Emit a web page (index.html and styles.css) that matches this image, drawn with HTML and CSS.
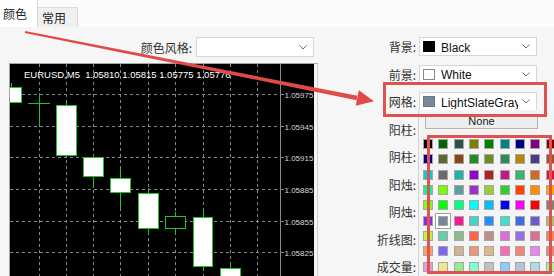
FILE: index.html
```html
<!DOCTYPE html>
<html lang="zh">
<head>
<meta charset="utf-8">
<link rel="stylesheet" href="styles.css">
</head>
<body>
<div class="tabs">
  <div class="tab active">颜色</div>
  <div class="tab">常用</div>
  <div class="tab-fill"></div>
</div>
<div class="panel">
  <div class="left">
    <div class="style-row">
      <span class="lbl">颜色风格:</span>
      <div class="combo wide"><svg class="chev" width="8" height="5" viewBox="0 0 8 5"><path d="M0.5 0.5 L4 4 L7.5 0.5" fill="none" stroke="#707070" stroke-width="1"/></svg></div>
    </div>
    <div class="chart">
      <svg class="chart-svg" width="304" height="212" viewBox="0 0 304 212">
        <g class="grid" stroke="#7d8a98" stroke-width="1" stroke-dasharray="3,3">
          <line x1="29.5" y1="0" x2="29.5" y2="212"/>
          <line x1="56.5" y1="0" x2="56.5" y2="212"/>
          <line x1="83.5" y1="0" x2="83.5" y2="212"/>
          <line x1="110.5" y1="0" x2="110.5" y2="212"/>
          <line x1="138.5" y1="0" x2="138.5" y2="212"/>
          <line x1="165.5" y1="0" x2="165.5" y2="212"/>
          <line x1="193.5" y1="0" x2="193.5" y2="212"/>
          <line x1="220.5" y1="0" x2="220.5" y2="212"/>
          <line x1="247.5" y1="0" x2="247.5" y2="212"/>
          <line x1="0" y1="30.5" x2="270" y2="30.5"/>
          <line x1="0" y1="62.5" x2="270" y2="62.5"/>
          <line x1="0" y1="93.5" x2="270" y2="93.5"/>
          <line x1="0" y1="125.5" x2="270" y2="125.5"/>
          <line x1="0" y1="157.5" x2="270" y2="157.5"/>
          <line x1="0" y1="188.5" x2="270" y2="188.5"/>
        </g>
        <line x1="270.5" y1="0" x2="270.5" y2="212" stroke="#8a8a8a"/>
        <g stroke="#8a8a8a">
          <line x1="270" y1="30.5" x2="274" y2="30.5"/>
          <line x1="270" y1="62.5" x2="274" y2="62.5"/>
          <line x1="270" y1="93.5" x2="274" y2="93.5"/>
          <line x1="270" y1="125.5" x2="274" y2="125.5"/>
          <line x1="270" y1="157.5" x2="274" y2="157.5"/>
          <line x1="270" y1="188.5" x2="274" y2="188.5"/>
        </g>
        <g class="prices" fill="#d8d8d8" font-family="Liberation Sans, Arial, sans-serif" font-size="8">
          <text x="274.5" y="33.5">1.05975</text>
          <text x="274.5" y="65.5">1.05945</text>
          <text x="274.5" y="96.5">1.05915</text>
          <text x="274.5" y="128.5">1.05885</text>
          <text x="274.5" y="160.5">1.05855</text>
          <text x="274.5" y="191.5">1.05825</text>
        </g>
        <text x="14" y="13.5" fill="#ffffff" font-family="Liberation Sans, Arial, sans-serif" font-size="9.5" xml:space="preserve">EURUSD,M5  1.05810 1.05815 1.05775 1.05776</text>
        <g stroke="#22c322" stroke-width="1" fill="none">
          <line x1="1.5" y1="19" x2="1.5" y2="23"/>
          <line x1="18" y1="39.5" x2="40" y2="39.5"/>
          <line x1="29.5" y1="29" x2="29.5" y2="61"/>
          <line x1="56.5" y1="39" x2="56.5" y2="41"/>
          <line x1="83.5" y1="113" x2="83.5" y2="124"/>
          <line x1="110.5" y1="105" x2="110.5" y2="144"/>
          <line x1="138.5" y1="124" x2="138.5" y2="171"/>
          <line x1="165.5" y1="148" x2="165.5" y2="171"/>
          <line x1="193.5" y1="145" x2="193.5" y2="206"/>
          <line x1="220.5" y1="198" x2="220.5" y2="212"/>
        </g>
        <g stroke="#22c322" stroke-width="1" fill="#ffffff">
          <rect x="-9.5" y="23.5" width="21" height="15"/>
          <rect x="46.5" y="41.5" width="20" height="50"/>
          <rect x="73.5" y="93.5" width="20" height="19"/>
          <rect x="100.5" y="114.5" width="20" height="14"/>
          <rect x="128.5" y="129.5" width="20" height="35"/>
          <rect x="155.5" y="152.5" width="20" height="12" fill="#000000"/>
          <rect x="183.5" y="153.5" width="19" height="49"/>
          <rect x="210.5" y="204.5" width="20" height="20"/>
        </g>
      </svg>
    </div>
  </div>
  <div class="right">
    <span class="lbl">背景:</span>
    <div class="combo"><span class="sw black"></span><span class="ctext">Black</span><svg class="chev" width="8" height="5" viewBox="0 0 8 5"><path d="M0.5 0.5 L4 4 L7.5 0.5" fill="none" stroke="#707070" stroke-width="1"/></svg></div>
    <span class="lbl">前景:</span>
    <div class="combo"><span class="sw white"></span><span class="ctext">White</span><svg class="chev" width="8" height="5" viewBox="0 0 8 5"><path d="M0.5 0.5 L4 4 L7.5 0.5" fill="none" stroke="#707070" stroke-width="1"/></svg></div>
    <span class="lbl">网格:</span>
    <div class="combo"><span class="sw slate"></span><span class="ctext">LightSlateGray</span><svg class="chev" width="8" height="5" viewBox="0 0 8 5"><path d="M0.5 0.5 L4 4 L7.5 0.5" fill="none" stroke="#707070" stroke-width="1"/></svg></div>
    <span class="lbl">阳柱:</span>
    <div class="combo"></div>
    <span class="lbl">阴柱:</span>
    <div class="combo"></div>
    <span class="lbl">阳烛:</span>
    <div class="combo"></div>
    <span class="lbl">阴烛:</span>
    <div class="combo"></div>
    <span class="lbl">折线图:</span>
    <div class="combo"></div>
    <span class="lbl">成交量:</span>
    <div class="combo"></div>
  </div>
</div>

<div class="popup">
  <div class="none">None</div>
  <div class="swatches">
    <span style="background:#000000"></span><span style="background:#006400"></span><span style="background:#2F4F4F"></span><span style="background:#808000"></span><span style="background:#008000"></span><span style="background:#008080"></span><span style="background:#000080"></span><span style="background:#800080"></span><span style="background:#800000"></span>
    <span style="background:#00008B"></span><span style="background:#556B2F"></span><span style="background:#8B4513"></span><span style="background:#228B22"></span><span style="background:#6B8E23"></span><span style="background:#2E8B57"></span><span style="background:#B8860B"></span><span style="background:#483D8B"></span><span style="background:#A0522D"></span>
    <span style="background:#00CED1"></span><span style="background:#696969"></span><span style="background:#20B2AA"></span><span style="background:#9400D3"></span><span style="background:#B22222"></span><span style="background:#C71585"></span><span style="background:#3CB371"></span><span style="background:#D2691E"></span><span style="background:#DC143C"></span>
    <span style="background:#00FA9A"></span><span style="background:#7CFC00"></span><span style="background:#5F9EA0"></span><span style="background:#9932CC"></span><span style="background:#9ACD32"></span><span style="background:#32CD32"></span><span style="background:#FF4500"></span><span style="background:#FF8C00"></span><span style="background:#FFA500"></span>
    <span style="background:#7FFF00"></span><span style="background:#00FF00"></span><span style="background:#00FF7F"></span><span style="background:#00FFFF"></span><span style="background:#00BFFF"></span><span style="background:#0000FF"></span><span style="background:#FF00FF"></span><span style="background:#FF0000"></span><span style="background:#808080"></span>
    <span style="background:#8A2BE2"></span><span class="sel" style="background:#778899"></span><span style="background:#FF1493"></span><span style="background:#48D1CC"></span><span style="background:#1E90FF"></span><span style="background:#40E0D0"></span><span style="background:#4169E1"></span><span style="background:#6A5ACD"></span><span style="background:#BDB76B"></span>
    <span style="background:#ADFF2F"></span><span style="background:#66CDAA"></span><span style="background:#8FBC8F"></span><span style="background:#FF6347"></span><span style="background:#BC8F8F"></span><span style="background:#DA70D6"></span><span style="background:#9370DB"></span><span style="background:#DB7093"></span><span style="background:#FF7F50"></span>
    <span style="background:#F4A460"></span><span style="background:#7B68EE"></span><span style="background:#D2B48C"></span><span style="background:#E9967A"></span><span style="background:#DEB887"></span><span style="background:#FF69B4"></span><span style="background:#FA8072"></span><span style="background:#EE82EE"></span><span style="background:#F08080"></span>
    <span style="background:#DDA0DD"></span><span style="background:#F0E68C"></span><span style="background:#90EE90"></span><span style="background:#7FFFD4"></span><span style="background:#C0C0C0"></span><span style="background:#87CEFA"></span><span style="background:#B0C4DE"></span><span style="background:#ADD8E6"></span><span style="background:#98FB98"></span>
  </div>
</div>

<svg class="annot" width="554" height="276" viewBox="0 0 554 276">
  <polygon points="25.18,31.12 357.43,95.84 356.57,100.16 24.82,32.88" fill="#e24a4a"/>
  <polygon points="374,101.3 358.9,90.2 355.7,105.8" fill="#e24a4a"/>
  <rect x="384.5" y="83.5" width="161" height="32" fill="none" stroke="#e05252" stroke-width="3"/>
  <rect x="428.5" y="136.5" width="122" height="136" fill="none" stroke="#e05252" stroke-width="3"/>
</svg>
</body>
</html>
```
FILE: styles.css
```css
* { box-sizing: border-box; }
html, body { margin: 0; padding: 0; }
body {
  width: 554px;
  height: 276px;
  overflow: hidden;
  position: relative;
  background: #f6f6f6;
  font-family: "Noto Sans CJK SC", "Liberation Sans", sans-serif;
  font-size: 12px;
  color: #222;
}

.tabs {
  display: flex;
  align-items: flex-end;
  height: 27px;
  background: #fbfbfb;
}
.tab {
  height: 20px;
  width: 40px;
  padding-left: 4px;
  line-height: 19px;
  background: #f0f0f0;
  border: 1px solid #dadada;
  border-bottom: none;
  border-left: none;
}
.tab.active {
  height: 27px;
  width: 38px;
  padding-left: 3px;
  line-height: 27px;
  background: #ffffff;
  border: none;
  border-right: 1px solid #dadada;
}
.tab-fill { flex: 1; }

.panel {
  display: flex;
  padding-top: 10px;
}
.left {
  width: 318px;
  padding-left: 9px;
  display: flex;
  flex-direction: column;
}
.style-row {
  display: flex;
  justify-content: flex-end;
  align-items: center;
  gap: 4px;
  height: 20px;
  padding-right: 4px;
}
.lbl {
  color: #333;
  white-space: nowrap;
}
.combo {
  height: 19px;
  background: #ffffff;
  border: 1px solid #d6d6d6;
  display: flex;
  align-items: center;
  padding: 0 6px 0 3px;
  font-family: "Liberation Sans", Arial, sans-serif;
  font-size: 12px;
  color: #111;
}
.combo.wide {
  width: 118px;
  height: 20px;
}
.ctext {
  flex: 1;
  min-width: 0;
  margin: 1px 4px 0 6px;
  height: 13px;
  line-height: 15px;
  white-space: nowrap;
  overflow: hidden;
}
.chev { flex: none; margin-left: auto; }
.sw {
  flex: none;
  width: 12px;
  height: 11px;
  border: 1px solid #555;
}
.sw.black { background: #000; border-color: #000; }
.sw.white { background: #fff; border-color: #888; }
.sw.slate { background: #778899; border-color: #6a7785; }

.chart {
  margin-top: 6px;
  width: 309px;
  height: 213px;
  border: 1px solid #a4a4a4;
  border-bottom: none;
  border-right-color: #d0d0d0;
  background: #f4f4f4;
  padding-right: 3px;
  overflow: hidden;
}
.chart-svg {
  display: block;
  background: #000;
}

.right {
  margin-left: 52px;
  display: grid;
  grid-template-columns: 46px 118px;
  grid-auto-rows: 19px;
  column-gap: 3px;
  row-gap: 8.5px;
}
.right .lbl {
  text-align: right;
  line-height: 19px;
}

.popup {
  position: absolute;
  left: 418px;
  top: 110px;
  width: 136px;
  height: 166px;
  overflow: hidden;
  background: #f4f4f4;
  border-left: 1px solid #d2d2d2;
}
.none {
  margin: 4px 0 0 6px;
  width: 113px;
  height: 15px;
  border: 1px solid #b4b4b4;
  background: #ededed;
  text-align: center;
  font-family: "Liberation Sans", Arial, sans-serif;
  font-size: 11px;
  line-height: 13px;
  color: #222;
}
.swatches {
  margin: 10px 0 0 4px;
  display: grid;
  grid-template-columns: repeat(9, 10px);
  grid-auto-rows: 10px;
  column-gap: 5.33px;
  row-gap: 5.33px;
}
.swatches span {
  border: 1px solid #a6a6a6;
}
.swatches span.sel {
  box-shadow: 0 0 0 2px #ffffff, 0 0 0 3px #a0a0a0;
}

.annot {
  position: absolute;
  left: 0;
  top: 0;
  pointer-events: none;
}
```
